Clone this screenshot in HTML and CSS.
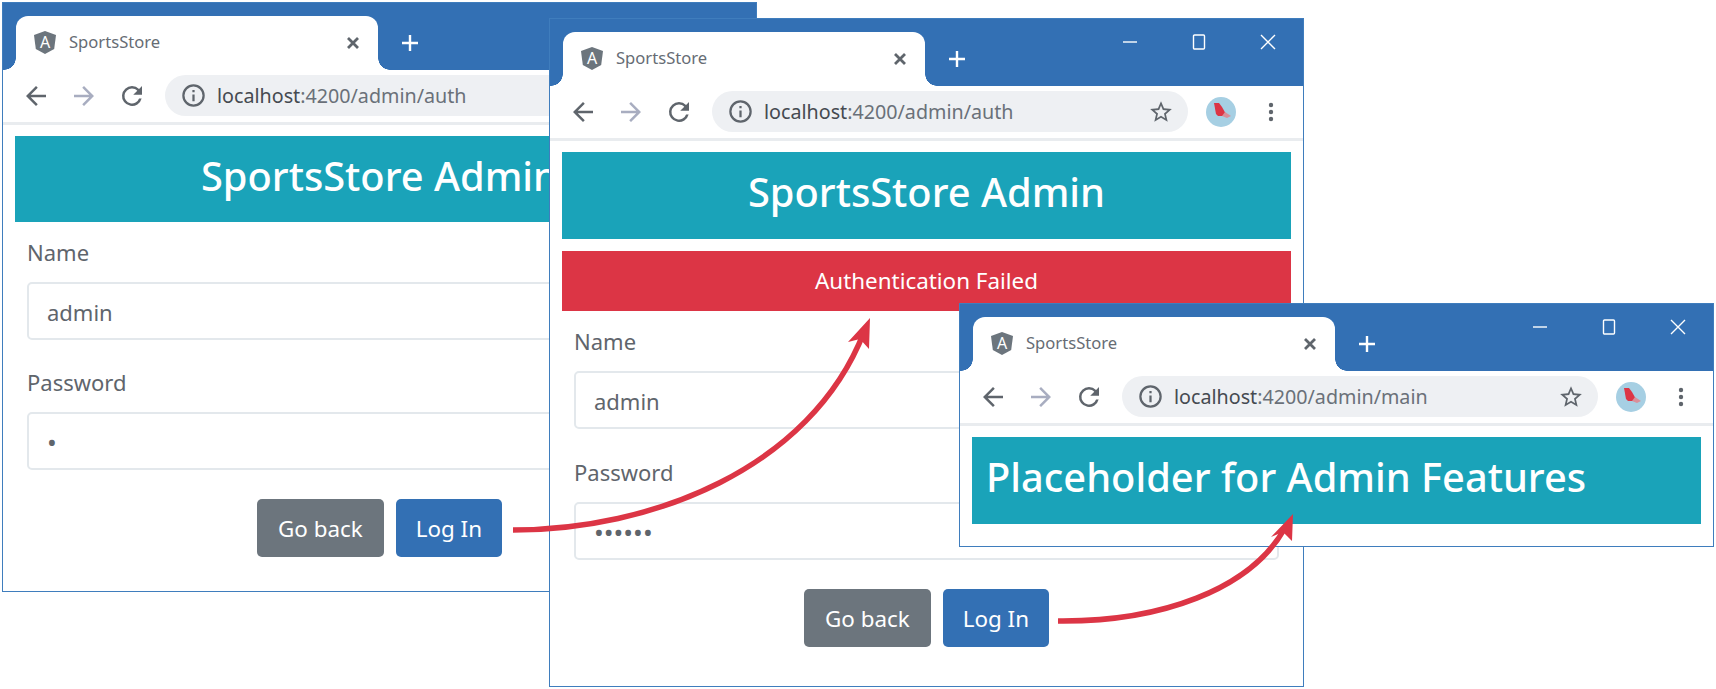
FILE: index.html
```html
<!DOCTYPE html>
<html lang="en">
<head>
  <meta charset="UTF-8">
  <meta name="viewport" content="width=device-width, initial-scale=1.0">
  <link rel="stylesheet" href="styles.css">
  <title>SportsStore</title>
</head>
<body>
  <svg class="icon-defs" aria-hidden="true">
    <symbol id="i-shield" viewBox="0 0 24 24">
      <polygon points="12,0.5 23,4.4 21.2,18.6 12,23.5 2.8,18.6 1,4.4" fill="#6c757d"/>
    </symbol>
    <symbol id="i-close" viewBox="0 0 16 16">
      <path d="M3 3l10 10M13 3L3 13" fill="none" stroke="currentColor" stroke-width="2.8"/>
    </symbol>
    <symbol id="i-plus" viewBox="0 0 20 20">
      <path d="M10 2v16M2 10h16" fill="none" stroke="currentColor" stroke-width="2.4"/>
    </symbol>
    <symbol id="i-back" viewBox="0 0 24 24">
      <path fill="currentColor" d="M20 11H7.83l5.59-5.59L12 4l-8 8 8 8 1.41-1.41L7.83 13H20v-2z"/>
    </symbol>
    <symbol id="i-forward" viewBox="0 0 24 24">
      <path fill="currentColor" d="M4 11h12.17l-5.59-5.59L12 4l8 8-8 8-1.41-1.41L16.17 13H4v-2z"/>
    </symbol>
    <symbol id="i-reload" viewBox="0 0 24 24">
      <path fill="currentColor" d="M17.65 6.35A7.96 7.96 0 0 0 12 4a8 8 0 1 0 7.73 10h-2.08A6 6 0 1 1 12 6c1.66 0 3.14.69 4.22 1.78L13 11h7V4l-2.35 2.35z"/>
    </symbol>
    <symbol id="i-info" viewBox="0 0 24 24">
      <path fill="currentColor" d="M11 7h2v2h-2zm0 4h2v6h-2zm1-9a10 10 0 1 0 0 20 10 10 0 0 0 0-20zm0 18a8 8 0 1 1 0-16 8 8 0 0 1 0 16z"/>
    </symbol>
    <symbol id="i-star" viewBox="0 0 24 24">
      <path fill="currentColor" d="M22 9.24l-7.19-.62L12 2 9.19 8.63 2 9.24l5.46 4.73L5.82 21 12 17.27 18.18 21l-1.63-7.03L22 9.24zM12 15.4l-3.76 2.27 1-4.28-3.32-2.88 4.38-.38L12 6.1l1.71 4.04 4.38.38-3.32 2.88 1 4.28L12 15.4z"/>
    </symbol>
    <symbol id="i-avatar" viewBox="0 0 30 30">
      <circle cx="15" cy="15" r="15" fill="#a6cfe3"/>
      <path d="M8 6l5 0 3 4 5 9-9 0-2-2z" fill="#dc3545"/>
      <path d="M19 15l6 4-4 2-5-2z" fill="#d98f9a"/>
    </symbol>
    <symbol id="i-menu" viewBox="0 0 6 24">
      <circle cx="3" cy="5" r="2.2" fill="currentColor"/>
      <circle cx="3" cy="12" r="2.2" fill="currentColor"/>
      <circle cx="3" cy="19" r="2.2" fill="currentColor"/>
    </symbol>
    <symbol id="i-min" viewBox="0 0 18 18">
      <path d="M2 9h14" fill="none" stroke="currentColor" stroke-width="1.4"/>
    </symbol>
    <symbol id="i-max" viewBox="0 0 18 18">
      <rect x="3.5" y="2" width="11" height="14" rx="1" fill="none" stroke="currentColor" stroke-width="1.4"/>
    </symbol>
    <symbol id="i-x" viewBox="0 0 18 18">
      <path d="M2 2l14 14M16 2L2 16" fill="none" stroke="currentColor" stroke-width="1.4"/>
    </symbol>
  </svg>

  <!-- first window: login form -->
  <section class="window window-login">
    <div class="tabstrip">
      <div class="tab">
        <svg class="tab-logo" viewBox="0 0 24 24"><use href="#i-shield"/><text class="shield-letter" x="12" y="17.5" text-anchor="middle">A</text></svg>
        <span class="tab-title">SportsStore</span>
        <svg class="tab-close"><use href="#i-close"/></svg>
      </div>
      <svg class="tab-new"><use href="#i-plus"/></svg>
    </div>
    <div class="toolbar">
      <svg class="nav-icon"><use href="#i-back"/></svg>
      <svg class="nav-icon nav-off"><use href="#i-forward"/></svg>
      <svg class="nav-icon"><use href="#i-reload"/></svg>
      <div class="omnibox">
        <svg class="info-icon"><use href="#i-info"/></svg>
        <span class="url"><b>localhost</b>:4200/admin/auth</span>
        <svg class="star-icon"><use href="#i-star"/></svg>
      </div>
      <svg class="avatar"><use href="#i-avatar"/></svg>
      <svg class="menu-icon"><use href="#i-menu"/></svg>
    </div>
    <div class="page">
      <h3 class="banner banner-center">SportsStore Admin</h3>
      <form class="login-form">
        <label class="field-label">Name</label>
        <input class="field-input" type="text" value="admin">
        <label class="field-label">Password</label>
        <input class="field-input field-secret" type="password" value="a">
        <div class="form-actions">
          <button class="btn btn-grey" type="button">Go back</button>
          <button class="btn btn-blue" type="submit">Log In</button>
        </div>
      </form>
    </div>
  </section>

  <!-- second window: failed login -->
  <section class="window window-failed">
    <div class="tabstrip">
      <div class="tab">
        <svg class="tab-logo" viewBox="0 0 24 24"><use href="#i-shield"/><text class="shield-letter" x="12" y="17.5" text-anchor="middle">A</text></svg>
        <span class="tab-title">SportsStore</span>
        <svg class="tab-close"><use href="#i-close"/></svg>
      </div>
      <svg class="tab-new"><use href="#i-plus"/></svg>
      <div class="win-controls">
        <svg><use href="#i-min"/></svg>
        <svg><use href="#i-max"/></svg>
        <svg><use href="#i-x"/></svg>
      </div>
    </div>
    <div class="toolbar">
      <svg class="nav-icon"><use href="#i-back"/></svg>
      <svg class="nav-icon nav-off"><use href="#i-forward"/></svg>
      <svg class="nav-icon"><use href="#i-reload"/></svg>
      <div class="omnibox">
        <svg class="info-icon"><use href="#i-info"/></svg>
        <span class="url"><b>localhost</b>:4200/admin/auth</span>
        <svg class="star-icon"><use href="#i-star"/></svg>
      </div>
      <svg class="avatar"><use href="#i-avatar"/></svg>
      <svg class="menu-icon"><use href="#i-menu"/></svg>
    </div>
    <div class="page">
      <h3 class="banner banner-center">SportsStore Admin</h3>
      <div class="alert">Authentication Failed</div>
      <form class="login-form">
        <label class="field-label">Name</label>
        <input class="field-input" type="text" value="admin">
        <label class="field-label">Password</label>
        <input class="field-input field-secret" type="password" value="secret">
        <div class="form-actions">
          <button class="btn btn-grey" type="button">Go back</button>
          <button class="btn btn-blue" type="submit">Log In</button>
        </div>
      </form>
    </div>
  </section>

  <!-- third window: admin placeholder -->
  <section class="window window-main">
    <div class="tabstrip">
      <div class="tab">
        <svg class="tab-logo" viewBox="0 0 24 24"><use href="#i-shield"/><text class="shield-letter" x="12" y="17.5" text-anchor="middle">A</text></svg>
        <span class="tab-title">SportsStore</span>
        <svg class="tab-close"><use href="#i-close"/></svg>
      </div>
      <svg class="tab-new"><use href="#i-plus"/></svg>
      <div class="win-controls">
        <svg><use href="#i-min"/></svg>
        <svg><use href="#i-max"/></svg>
        <svg><use href="#i-x"/></svg>
      </div>
    </div>
    <div class="toolbar">
      <svg class="nav-icon"><use href="#i-back"/></svg>
      <svg class="nav-icon nav-off"><use href="#i-forward"/></svg>
      <svg class="nav-icon"><use href="#i-reload"/></svg>
      <div class="omnibox">
        <svg class="info-icon"><use href="#i-info"/></svg>
        <span class="url"><b>localhost</b>:4200/admin/main</span>
        <svg class="star-icon"><use href="#i-star"/></svg>
      </div>
      <svg class="avatar"><use href="#i-avatar"/></svg>
      <svg class="menu-icon"><use href="#i-menu"/></svg>
    </div>
    <div class="page">
      <h3 class="banner banner-left">Placeholder for Admin Features</h3>
    </div>
  </section>

  <svg class="arrows" viewBox="0 0 1716 689" aria-hidden="true">
    <path class="arrow-line" d="M513 530C650 530 810 470 864 332"/>
    <polygon class="arrow-head" points="848,342 870,318 869,349 860,339"/>
    <path class="arrow-line" d="M1058 621C1160 622 1250 590 1285 528"/>
    <polygon class="arrow-head" points="1271,537 1293,514 1292,541 1283,532"/>
  </svg>
</body>
</html>
```

FILE: styles.css
```css
* {
  box-sizing: border-box;
}

body {
  margin: 0;
  width: 1716px;
  height: 689px;
  position: relative;
  overflow: hidden;
  background: #fff;
  font-family: "Noto Sans", "Open Sans", sans-serif;
  color: #5f656c;
}

.icon-defs {
  position: absolute;
  width: 0;
  height: 0;
}

.shield-letter {
  font-family: "Noto Sans", sans-serif;
  font-size: 16px;
  fill: #fff;
}

/* windows sit on a free canvas */
.window {
  position: absolute;
  width: 755px;
  background: #fff;
  outline: 1.5px solid #3f7dbd;
  outline-offset: -1.5px;
}

.window-login {
  left: 2px;
  top: 2px;
  height: 590px;
}

.window-failed {
  left: 549px;
  top: 18px;
  height: 669px;
}

.window-main {
  left: 959px;
  top: 303px;
  height: 244px;
}

.tabstrip {
  height: 68px;
  padding: 14px 0 0 14px;
  background: #3370b4;
  display: flex;
  align-items: flex-start;
}

.tab {
  position: relative;
  width: 362px;
  height: 54px;
  padding: 0 17px 0 17px;
  background: #fff;
  border-radius: 12px 12px 0 0;
  display: flex;
  align-items: center;
}

.tab::before,
.tab::after {
  content: "";
  position: absolute;
  bottom: 0;
  width: 12px;
  height: 12px;
}

.tab::before {
  left: -12px;
  background: radial-gradient(circle at 0 0, transparent 11.5px, #fff 12px);
}

.tab::after {
  right: -12px;
  background: radial-gradient(circle at 100% 0, transparent 11.5px, #fff 12px);
}

.tab-logo {
  width: 24px;
  height: 25px;
  margin: 0 12px 2px 0;
}

.tab-title {
  margin-bottom: 3px;
  font-size: 16.6px;
  color: #666c74;
}

.tab-close {
  width: 16px;
  height: 16px;
  margin-left: auto;
  color: #5f656c;
}

.tab-new {
  width: 20px;
  height: 20px;
  margin: 17px 0 0 22px;
  color: #fff;
}

.win-controls {
  margin-left: auto;
  padding-right: 27px;
  margin-top: 1px;
  display: flex;
  gap: 51px;
  color: #fff;
}

.win-controls svg {
  width: 18px;
  height: 18px;
}

.toolbar {
  height: 55px;
  padding: 0 0 1px 19px;
  border-bottom: 3px solid #e9ecef;
  display: flex;
  align-items: center;
}

.nav-icon {
  width: 30px;
  height: 30px;
  margin-right: 18px;
  color: #5f656c;
}

.nav-off {
  color: #a8adc0;
}

.omnibox {
  width: 476px;
  height: 41px;
  padding: 0 14px 0 15px;
  background: #eef0f3;
  border-radius: 21px;
  display: flex;
  align-items: center;
}

.info-icon {
  width: 27px;
  height: 27px;
  margin-right: 10px;
  color: #5f656c;
}

.url {
  font-size: 19.7px;
  color: #6a7079;
}

.url b {
  font-weight: 400;
  color: #454a50;
}

.star-icon {
  width: 26px;
  height: 26px;
  margin-left: auto;
  color: #5f656c;
}

.avatar {
  width: 30px;
  height: 30px;
  margin-left: 18px;
}

.menu-icon {
  width: 6px;
  height: 24px;
  margin-left: 32px;
  color: #5f656c;
}

.page {
  padding: 11px 13px 13px;
}

.banner {
  margin: 0;
  height: 87px;
  padding: 0 14px;
  background: #1aa3b9;
  color: #fff;
  font-size: 39.8px;
  font-weight: 550;
  line-height: 80px;
}

.window-login .banner {
  height: 86px;
}

.banner-center {
  text-align: center;
}

.banner-left {
  text-align: left;
}

.alert {
  margin-top: 12px;
  height: 60px;
  background: #dc3545;
  color: #fff;
  font-size: 22.4px;
  line-height: 60px;
  text-align: center;
}

.login-form {
  padding: 12px 12px 0;
  display: flex;
  flex-direction: column;
}

.field-label {
  height: 36px;
  margin-bottom: 12px;
  font-size: 22px;
  line-height: 36px;
}

.field-input {
  height: 58px;
  margin-bottom: 25px;
  padding: 2px 18px 0;
  border: 2px solid #e3e8ec;
  border-radius: 5px;
  font-family: inherit;
  font-size: 22px;
  color: #5f656c;
}

.field-secret {
  font-size: 26px;
}

.window-login .field-input {
  margin-bottom: 24px;
}

.form-actions {
  margin-top: 4px;
  display: flex;
  justify-content: center;
  gap: 12px;
}

.window-login .form-actions {
  margin-top: 5px;
}

.btn {
  height: 58px;
  padding: 0 20px;
  border: none;
  border-radius: 5px;
  color: #fff;
  font-family: inherit;
  font-size: 22.4px;
}

.btn-grey {
  padding: 0 21px;
  background: #6c757d;
}

.btn-blue {
  background: #3370b4;
}

.arrows {
  position: absolute;
  left: 0;
  top: 0;
  width: 1716px;
  height: 689px;
  pointer-events: none;
}

.arrow-line {
  fill: none;
  stroke: #dc3545;
  stroke-width: 5.5;
}

.arrow-head {
  fill: #dc3545;
}
```
